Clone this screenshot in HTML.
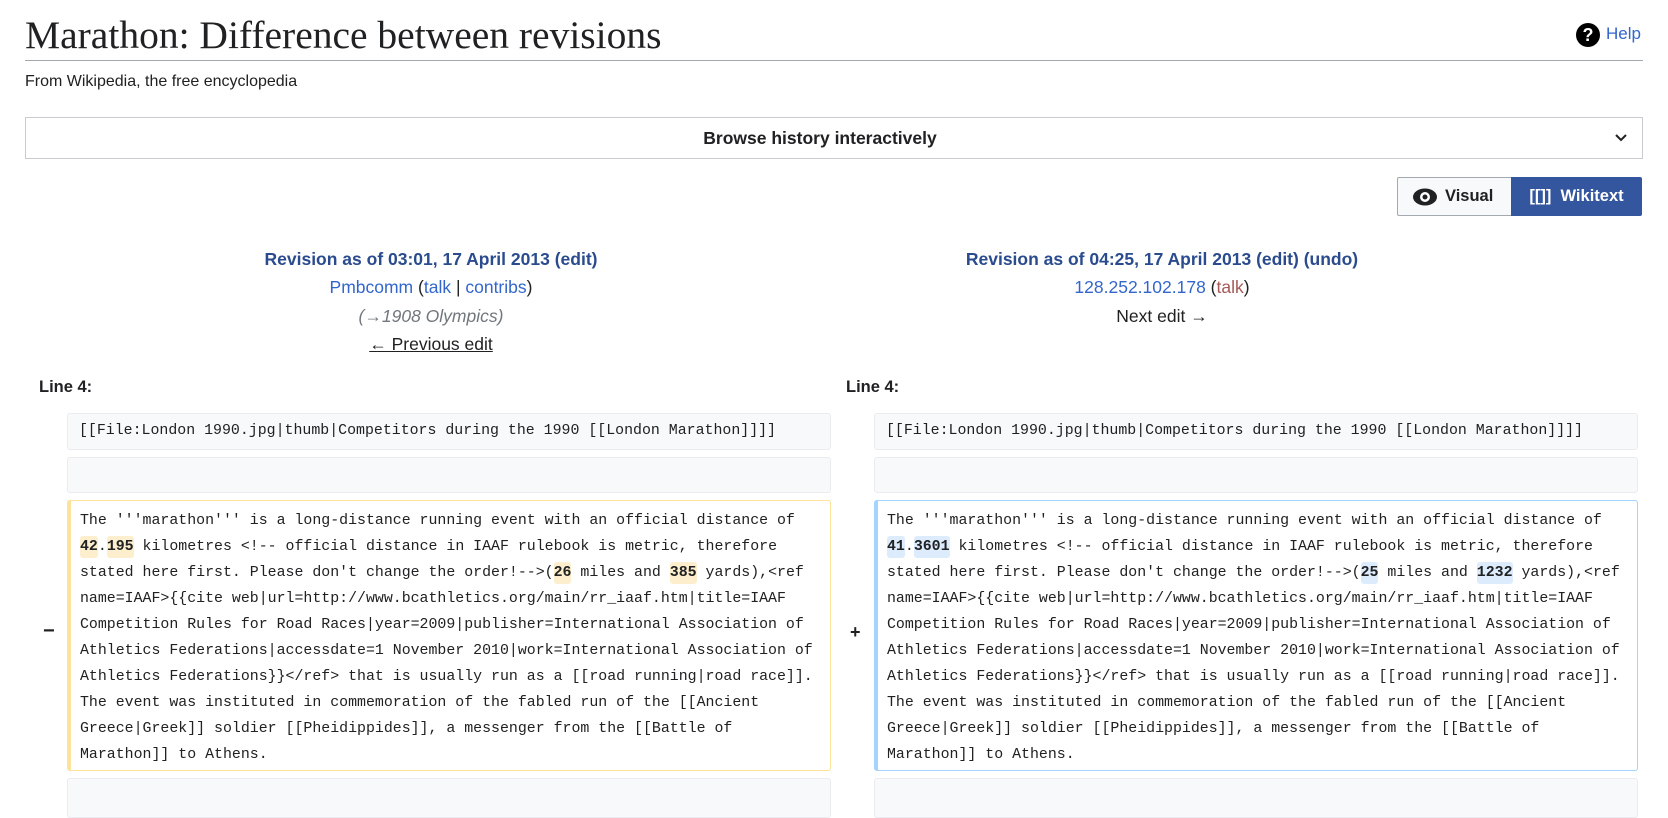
<!DOCTYPE html>
<html><head><meta charset="utf-8"><style>
body{margin:0;width:1668px;height:805px;overflow:hidden;background:#fff;font-family:"Liberation Sans",sans-serif;color:#202122;position:relative}
.a{position:absolute}
h1{position:absolute;left:25px;top:12px;margin:0;font-family:"Liberation Serif",serif;font-weight:normal;font-size:39.5px;white-space:nowrap}
.c{text-align:center;font-size:17.5px;width:700px;white-space:nowrap}
.b{color:#2a4b8d;font-weight:bold}
.l{color:#3366cc}
.box{position:absolute;box-sizing:border-box;border:1px solid #eaecf0;background:#f8f9fa;border-radius:3px;font-family:"Liberation Mono",monospace;font-size:14.9px;color:#202122}
.t{position:absolute;left:12px;white-space:pre}
.d{box-sizing:border-box;position:absolute;background:#fff;border-radius:3px;font-family:"Liberation Mono",monospace;font-size:14.9px;line-height:26px;padding:7px 0 0 9px;white-space:pre}
.ol{border:1px solid #fde29b;border-left:4px solid #fde29b;}
.or{border:1px solid #a3d3ff;border-left:4px solid #a3d3ff;}
.hy{background:#fdefcd;font-weight:bold;border-radius:3px;padding:3px 0}
.hb{background:#dcecfd;font-weight:bold;border-radius:3px;padding:3px 0}
</style></head><body>
<h1>Marathon: Difference between revisions</h1>
<div class="a" style="left:25px;top:60px;width:1618px;height:1px;background:#a2a9b1"></div>
<div class="a" style="left:1576px;top:23px;width:24px;height:24px;border-radius:50%;background:#000;color:#fff;font-weight:bold;font-size:18px;text-align:center;line-height:24px">?</div>
<div class="a l" style="left:1606px;top:24px;font-size:17px">Help</div>
<div class="a" style="left:25px;top:73px;font-size:16px">From Wikipedia, the free encyclopedia</div>
<div class="a" style="left:25px;top:117px;width:1618px;height:42px;box-sizing:border-box;border:1px solid #c8ccd1;padding-right:28px;text-align:center;font-weight:bold;font-size:17.5px;line-height:40px">Browse history interactively
<svg class="a" style="right:14px;top:14px" width="14" height="12" viewBox="0 0 14 12"><path d="M2 3l5 5 5-5" fill="none" stroke="#202122" stroke-width="2"/></svg></div>
<div class="a" style="left:1397px;top:177px;width:115px;height:39px;box-sizing:border-box;border:1px solid #a2a9b1;border-right:none;border-radius:2px 0 0 2px;background:#f8f9fa;font-weight:bold;font-size:16.5px;line-height:37px">
<svg class="a" style="left:14px;top:10px" width="26" height="18" viewBox="0 0 26 18"><ellipse cx="13" cy="9" rx="12" ry="8.5" fill="#202122"/><circle cx="13" cy="9" r="5" fill="#fff"/><circle cx="13" cy="9" r="2.5" fill="#202122"/></svg>
<span class="a" style="left:47px">Visual</span></div>
<div class="a" style="left:1511px;top:177px;width:131px;height:39px;background:#34569f;border-radius:0 2px 2px 0;color:#fff;font-weight:bold;font-size:16.5px;line-height:39px;text-align:center">[[]] &nbsp;Wikitext</div>

<div class="a c" style="left:81px;top:249px"><span class="b">Revision as of 03:01, 17 April 2013</span> <span class="b">(edit)</span></div>
<div class="a c" style="left:81px;top:277px"><span class="l">Pmbcomm</span> (<span class="l">talk</span> | <span class="l">contribs</span>)</div>
<div class="a c" style="left:81px;top:306px;color:#72777d;font-style:italic">(→1908 Olympics)</div>
<div class="a c" style="left:81px;top:334px;text-decoration:underline">← Previous edit</div>
<div class="a c" style="left:812px;top:249px"><span class="b">Revision as of 04:25, 17 April 2013</span> <span class="b">(edit)</span> <span class="b">(undo)</span></div>
<div class="a c" style="left:812px;top:277px"><span class="l">128.252.102.178</span> (<span style="color:#a55858">talk</span>)</div>
<div class="a c" style="left:812px;top:306px">Next edit →</div>

<div class="a" style="left:39px;top:378px;font-weight:bold;font-size:16.5px">Line 4:</div>
<div class="a" style="left:846px;top:378px;font-weight:bold;font-size:16.5px">Line 4:</div>

<div class="box" style="left:67px;top:413px;width:764px;height:37px"><span class="t" style="top:9px;left:11px">[[File:London 1990.jpg|thumb|Competitors during the 1990 [[London Marathon]]]]</span></div>
<div class="box" style="left:874px;top:413px;width:764px;height:37px"><span class="t" style="top:9px;left:11px">[[File:London 1990.jpg|thumb|Competitors during the 1990 [[London Marathon]]]]</span></div>
<div class="box" style="left:67px;top:457px;width:764px;height:36px"></div>
<div class="box" style="left:874px;top:457px;width:764px;height:36px"></div>

<div class="a" style="left:43px;top:620px;font-weight:bold;font-size:20px">−</div>
<div class="a" style="left:850px;top:622px;font-weight:bold;font-size:18px">+</div>

<div class="d ol" style="left:67px;top:500px;width:764px;height:271px">The '''marathon''' is a long-distance running event with an official distance of
<span class="hy">42</span>.<span class="hy">195</span> kilometres &lt;!-- official distance in IAAF rulebook is metric, therefore
stated here first. Please don't change the order!--&gt;(<span class="hy">26</span> miles and <span class="hy">385</span> yards),&lt;ref
name=IAAF&gt;{{cite web|url=http://www.bcathletics.org/main/rr_iaaf.htm|title=IAAF
Competition Rules for Road Races|year=2009|publisher=International Association of
Athletics Federations|accessdate=1 November 2010|work=International Association of
Athletics Federations}}&lt;/ref&gt; that is usually run as a [[road running|road race]].
The event was instituted in commemoration of the fabled run of the [[Ancient
Greece|Greek]] soldier [[Pheidippides]], a messenger from the [[Battle of
Marathon]] to Athens.</div>
<div class="d or" style="left:874px;top:500px;width:764px;height:271px">The '''marathon''' is a long-distance running event with an official distance of
<span class="hb">41</span>.<span class="hb">3601</span> kilometres &lt;!-- official distance in IAAF rulebook is metric, therefore
stated here first. Please don't change the order!--&gt;(<span class="hb">25</span> miles and <span class="hb">1232</span> yards),&lt;ref
name=IAAF&gt;{{cite web|url=http://www.bcathletics.org/main/rr_iaaf.htm|title=IAAF
Competition Rules for Road Races|year=2009|publisher=International Association of
Athletics Federations|accessdate=1 November 2010|work=International Association of
Athletics Federations}}&lt;/ref&gt; that is usually run as a [[road running|road race]].
The event was instituted in commemoration of the fabled run of the [[Ancient
Greece|Greek]] soldier [[Pheidippides]], a messenger from the [[Battle of
Marathon]] to Athens.</div>

<div class="box" style="left:67px;top:778px;width:764px;height:40px"></div>
<div class="box" style="left:874px;top:778px;width:764px;height:40px"></div>
</body></html>
